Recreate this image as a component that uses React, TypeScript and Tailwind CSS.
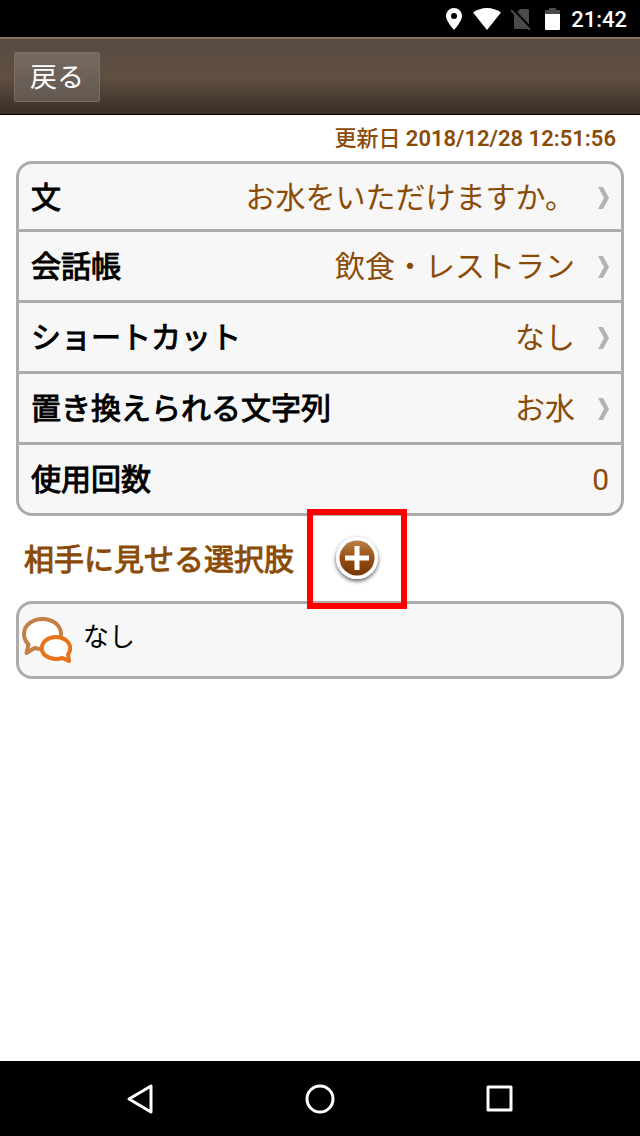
import React from 'react';

interface DetailRow {
    label: string;
    value: string;
    editable: boolean;
}

const ROWS: DetailRow[] = [
    { label: '文', value: 'お水をいただけますか。', editable: true },
    { label: '会話帳', value: '飲食・レストラン', editable: true },
    { label: 'ショートカット', value: 'なし', editable: true },
    { label: '置き換えられる文字列', value: 'お水', editable: true },
    { label: '使用回数', value: '0', editable: false },
];

const StatusBar: React.FC = () => (
    <div className="flex h-[37px] items-center justify-end bg-black pr-[13px] text-white">
        <svg className="mr-[11px] h-[22px] w-4" viewBox="0 0 16 22" fill="currentColor">
            <path fillRule="evenodd" d="M8 0a8 8 0 0 0-8 8c0 5.500 8 14 8 14s8-8.500 8-14a8 8 0 0 0-8-8Zm0 5a3 3 0 1 1 0 6 3 3 0 0 1 0-6Z" />
        </svg>
        <svg className="mr-[10px] h-[22px] w-7" viewBox="0 0 28 22" fill="currentColor">
            <path d="M14 22 0 4.500C4 1.500 9 0 14 0s10 1.500 14 4.500Z" />
        </svg>
        <svg className="mr-[14px] h-[22px] w-5" viewBox="0 0 20 22">
            <path d="M9 1h8a1 1 0 0 1 1 1v18a1 1 0 0 1-1 1H4a1 1 0 0 1-1-1V7Z" fill="#4a4a4a" />
            <path d="m2 1 18 19" stroke="#000" strokeWidth="2" />
            <path d="m0 2 19 20" stroke="#4a4a4a" strokeWidth="2" />
        </svg>
        <svg className="mr-[11px] h-[22px] w-[15px]" viewBox="0 0 15 22">
            <path d="M4 0h7v2h4v4H0V2h4Z" fill="#4a4a4a" />
            <path d="M0 6h15v15a1 1 0 0 1-1 1H1a1 1 0 0 1-1-1Z" fill="#fff" />
        </svg>
        <span className="pt-[2px] font-[Roboto,sans-serif] text-[22px] font-medium leading-none">21:42</span>
    </div>
);

const Chevron: React.FC = () => (
    <svg className="ml-[22px] h-[22px] w-3 shrink-0" viewBox="0 0 12 22" fill="#b3b3b3">
        <path d="M1 0h5l6 11-6 11H1l6-11Z" />
    </svg>
);

const ChatIcon: React.FC = () => (
    <svg className="h-[46px] w-[50px] shrink-0" viewBox="0 0 50 46" fill="#fff" strokeWidth="4" strokeLinejoin="round">
        <path d="M20.500 2C10 2 2 8.500 2 17c0 5 2 8 4.500 10.500L4.500 36l8-5c3 .8 5 1 8 1C31 32 39 25.500 39 17S31 2 20.500 2Z" stroke="#c48044" />
        <path d="M34 20c-8 0-14.200 5-14.200 11.200S26 42 34 42c2.500 0 4.500-.3 6.500-1l6.500 3-1-6.500c1.500-2 2.200-4 2.200-6.300C48.200 25 42 20 34 20Z" stroke="#e8731a" />
    </svg>
);

const AddIcon: React.FC = () => (
    <svg className="block h-[54px] w-[54px]" viewBox="0 0 54 54">
        <defs>
            <linearGradient id="add-fill" x1="0" y1="0" x2="0" y2="1">
                <stop offset="0" stopColor="#bd8049" />
                <stop offset="0.5" stopColor="#964e12" />
                <stop offset="1" stopColor="#763600" />
            </linearGradient>
            <filter id="add-shadow" x="-20%" y="-20%" width="140%" height="140%">
                <feDropShadow dx="0" dy="2" stdDeviation="2" floodColor="#000" floodOpacity="0.65" />
            </filter>
        </defs>
        <circle cx="27" cy="26" r="21" fill="#fff" filter="url(#add-shadow)" />
        <circle cx="27" cy="26" r="17.5" fill="url(#add-fill)" />
        <path d="M27 14v24M15 26h24" stroke="#fff" strokeWidth="5" />
    </svg>
);

const NavBar: React.FC = () => (
    <nav className="flex h-[75px] items-center justify-center gap-[126px] bg-black text-white">
        <button aria-label="Back" className="flex w-[54px] justify-center">
            <svg className="h-8 w-8" viewBox="0 0 32 32" fill="none" stroke="currentColor" strokeWidth="3" strokeLinejoin="round">
                <path d="M5 16 27 3v26Z" />
            </svg>
        </button>
        <button aria-label="Home" className="flex w-[54px] justify-center">
            <svg className="h-8 w-8" viewBox="0 0 32 32" fill="none" stroke="currentColor" strokeWidth="3">
                <circle cx="16" cy="16" r="13" />
            </svg>
        </button>
        <button aria-label="Recent apps" className="flex w-[54px] justify-center">
            <svg className="h-8 w-8" viewBox="0 0 32 32" fill="none" stroke="currentColor" strokeWidth="3" strokeLinejoin="round">
                <path d="M4 4h23v23H4Z" />
            </svg>
        </button>
    </nav>
);

export default function App() {
    return (
        <div className="flex min-h-screen flex-col bg-white font-[Roboto,'Noto_Sans_CJK_JP',sans-serif] text-black">
            <StatusBar />

            {/* Header */}
            <header className="flex h-[78px] items-center border-t-2 border-b border-t-[#85735c] border-b-black bg-linear-to-b from-[#574a40] via-[#605041] to-[#3a2e26] px-[14px]">
                <button className="flex h-[50px] items-center rounded-xs border border-[#7a7067] bg-linear-to-b from-[#756a61] to-[#635951] px-[15px] pt-1 text-[27px] leading-none text-white">
                    戻る
                </button>
            </header>

            <main className="flex grow flex-col px-4">
                <p className="mt-2 pr-2 text-right text-[22px] font-medium leading-8 text-[#8a4b08]">
                    更新日 <span className="font-semibold">2018/12/28 12:51:56</span>
                </p>

                {/* Details */}
                <ul className="mt-[6px] divide-y-3 divide-[#acacac] rounded-2xl border-3 border-[#acacac] bg-[#f7f7f7]">
                    {ROWS.map((row) => (
                        <li key={row.label} className="first:h-[68px] h-[71px] last:h-[68px]">
                            <button
                                disabled={!row.editable}
                                className="flex h-full w-full items-center pl-3 pr-3 pt-[2px] text-left text-[30px] leading-10"
                            >
                                <span className="[-webkit-text-stroke:1px]">{row.label}</span>
                                <span className="ml-auto text-[#8a4b08]">{row.value}</span>
                                {row.editable && <Chevron />}
                            </button>
                        </li>
                    ))}
                </ul>

                {/* Choices */}
                <div className="flex h-[85px] items-center pl-2">
                    <h2 className="pt-[2px] text-[30px] leading-10 text-[#8a4b08] [-webkit-text-stroke:1px]">相手に見せる選択肢</h2>
                    <div className="relative ml-[36px]">
                        <button aria-label="追加" className="block">
                            <AddIcon />
                        </button>
                        <div className="pointer-events-none absolute -inset-[23px] border-6 border-[#ff0000]" />
                    </div>
                </div>

                <div className="flex h-[78px] items-center rounded-2xl border-3 border-[#acacac] bg-[#f7f7f7] pl-[3px]">
                    <ChatIcon />
                    <span className="ml-[11px] pb-[6px] text-[26px] leading-9">なし</span>
                </div>
            </main>

            <NavBar />
        </div>
    );
}
